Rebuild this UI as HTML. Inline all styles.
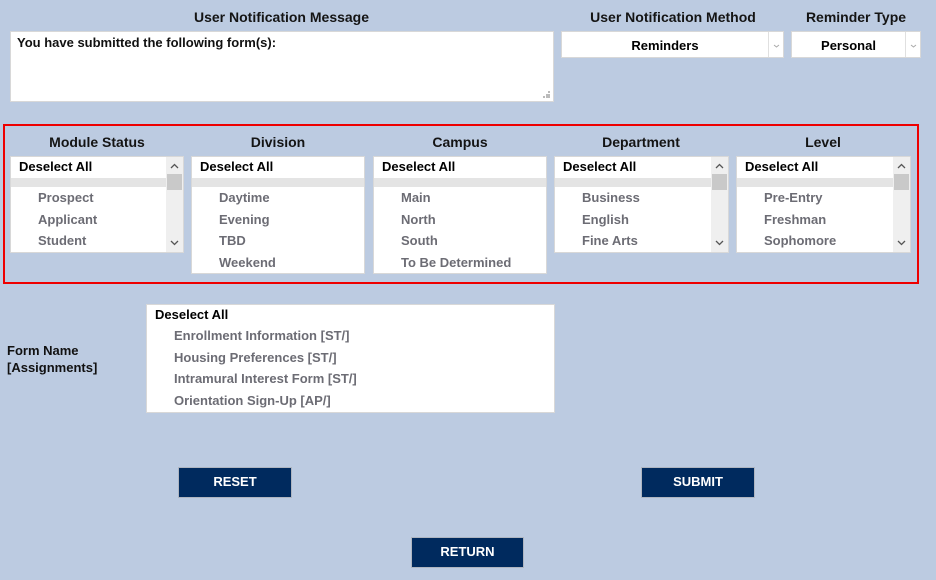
<!DOCTYPE html>
<html><head><meta charset="utf-8"><style>
*{box-sizing:border-box;margin:0;padding:0}
body{width:936px;height:580px;background:#bccbe1;font-family:"Liberation Sans",Arial,sans-serif;font-weight:bold;font-size:13px;color:#111;position:relative;overflow:hidden}
.a{position:absolute}
.t{position:absolute;font-size:14px;text-align:center;color:#141414}
.box{position:absolute;background:#fff;border:1px solid #d8d8d8;overflow:hidden}
.hd{height:20px;line-height:19px;padding-left:8px;color:#000;font-size:13px}
.gr{height:9px;background:#e4e4e4;margin-top:1px}
.it{line-height:21.5px;padding-left:27px;color:#6c6c74}
.sb{position:absolute;right:0;top:0;bottom:0;width:17px;background:#efefef}
.th{position:absolute;left:1px;right:1px;top:17px;height:16px;background:#c9c9c9}
.ar{position:absolute;left:4px}
.btn{position:absolute;background:#002a5e;border:1px solid #aeb5c0;color:#fff;text-align:center;line-height:28px;font-size:13px}
.sel{position:absolute;background:#fff;border:1px solid #d8d8d8;text-align:center;line-height:27px;color:#000}
.dd{position:absolute;right:0;top:0;bottom:0;width:15px;border-left:1px solid #e0e0e0}
</style></head><body>
<div class="t" style="left:10px;width:543px;top:9px">User Notification Message</div>
<div class="t" style="left:562px;width:222px;top:9px">User Notification Method</div>
<div class="t" style="left:792px;width:128px;top:9px">Reminder Type</div>
<div class="box" style="left:10px;top:31px;width:544px;height:71px;padding:3px 6px">You have submitted the following form(s):
<svg class="a" style="right:3px;bottom:3px" width="7" height="7"><rect x="5" y="0" width="2" height="2" fill="#bbb"/><rect x="3" y="3" width="2" height="2" fill="#bbb"/><rect x="5" y="3" width="2" height="2" fill="#bbb"/><rect x="0" y="5" width="2" height="2" fill="#bbb"/><rect x="3" y="5" width="2" height="2" fill="#bbb"/><rect x="5" y="5" width="2" height="2" fill="#bbb"/></svg></div>
<div class="sel" style="left:561px;top:31px;width:223px;height:27px;padding-right:15px">Reminders<div class="dd"><svg class="a" style="left:4px;top:12px" width="7" height="4"><path d="M1 1 L3.5 3 L6 1" stroke="#aaa" fill="none"/></svg></div></div>
<div class="sel" style="left:791px;top:31px;width:130px;height:27px;padding-right:15px">Personal<div class="dd"><svg class="a" style="left:4px;top:12px" width="7" height="4"><path d="M1 1 L3.5 3 L6 1" stroke="#aaa" fill="none"/></svg></div></div>

<div class="a" style="left:3px;top:124px;width:916px;height:160px;border:2px solid #ee0000"></div>

<div class="t" style="left:10px;width:174px;top:134px">Module Status</div>
<div class="t" style="left:191px;width:174px;top:134px">Division</div>
<div class="t" style="left:373px;width:174px;top:134px">Campus</div>
<div class="t" style="left:554px;width:174px;top:134px">Department</div>
<div class="t" style="left:736px;width:174px;top:134px">Level</div>

<div class="box" style="left:10px;top:156px;width:174px;height:97px"><div style="margin-right:17px"><div class="hd">Deselect All</div><div class="gr"></div><div class="it">Prospect</div><div class="it">Applicant</div><div class="it">Student</div></div><div class="sb"><svg class="ar" style="top:6px" width="9" height="6"><path d="M1 5 L4.5 1.5 L8 5" stroke="#555" stroke-width="1.3" fill="none"/></svg><div class="th"></div><svg class="ar" style="bottom:6px" width="9" height="6"><path d="M1 1 L4.5 4.5 L8 1" stroke="#555" stroke-width="1.3" fill="none"/></svg></div></div>
<div class="box" style="left:191px;top:156px;width:174px;height:118px"><div class="hd">Deselect All</div><div class="gr"></div><div class="it">Daytime</div><div class="it">Evening</div><div class="it">TBD</div><div class="it">Weekend</div></div>
<div class="box" style="left:373px;top:156px;width:174px;height:118px"><div class="hd">Deselect All</div><div class="gr"></div><div class="it">Main</div><div class="it">North</div><div class="it">South</div><div class="it">To Be Determined</div></div>
<div class="box" style="left:554px;top:156px;width:175px;height:97px"><div style="margin-right:17px"><div class="hd">Deselect All</div><div class="gr"></div><div class="it">Business</div><div class="it">English</div><div class="it">Fine Arts</div></div><div class="sb"><svg class="ar" style="top:6px" width="9" height="6"><path d="M1 5 L4.5 1.5 L8 5" stroke="#555" stroke-width="1.3" fill="none"/></svg><div class="th"></div><svg class="ar" style="bottom:6px" width="9" height="6"><path d="M1 1 L4.5 4.5 L8 1" stroke="#555" stroke-width="1.3" fill="none"/></svg></div></div>
<div class="box" style="left:736px;top:156px;width:175px;height:97px"><div style="margin-right:17px"><div class="hd">Deselect All</div><div class="gr"></div><div class="it">Pre-Entry</div><div class="it">Freshman</div><div class="it">Sophomore</div></div><div class="sb"><svg class="ar" style="top:6px" width="9" height="6"><path d="M1 5 L4.5 1.5 L8 5" stroke="#555" stroke-width="1.3" fill="none"/></svg><div class="th"></div><svg class="ar" style="bottom:6px" width="9" height="6"><path d="M1 1 L4.5 4.5 L8 1" stroke="#555" stroke-width="1.3" fill="none"/></svg></div></div>

<div class="a" style="left:7px;top:342px;line-height:17px;font-size:13px">Form Name<br>[Assignments]</div>
<div class="box" style="left:146px;top:304px;width:409px;height:109px"><div class="hd">Deselect All</div><div class="it">Enrollment Information [ST/]</div><div class="it">Housing Preferences [ST/]</div><div class="it">Intramural Interest Form [ST/]</div><div class="it">Orientation Sign-Up [AP/]</div></div>

<div class="btn" style="left:178px;top:467px;width:114px;height:31px">RESET</div>
<div class="btn" style="left:641px;top:467px;width:114px;height:31px">SUBMIT</div>
<div class="btn" style="left:411px;top:537px;width:113px;height:31px">RETURN</div>
</body></html>
